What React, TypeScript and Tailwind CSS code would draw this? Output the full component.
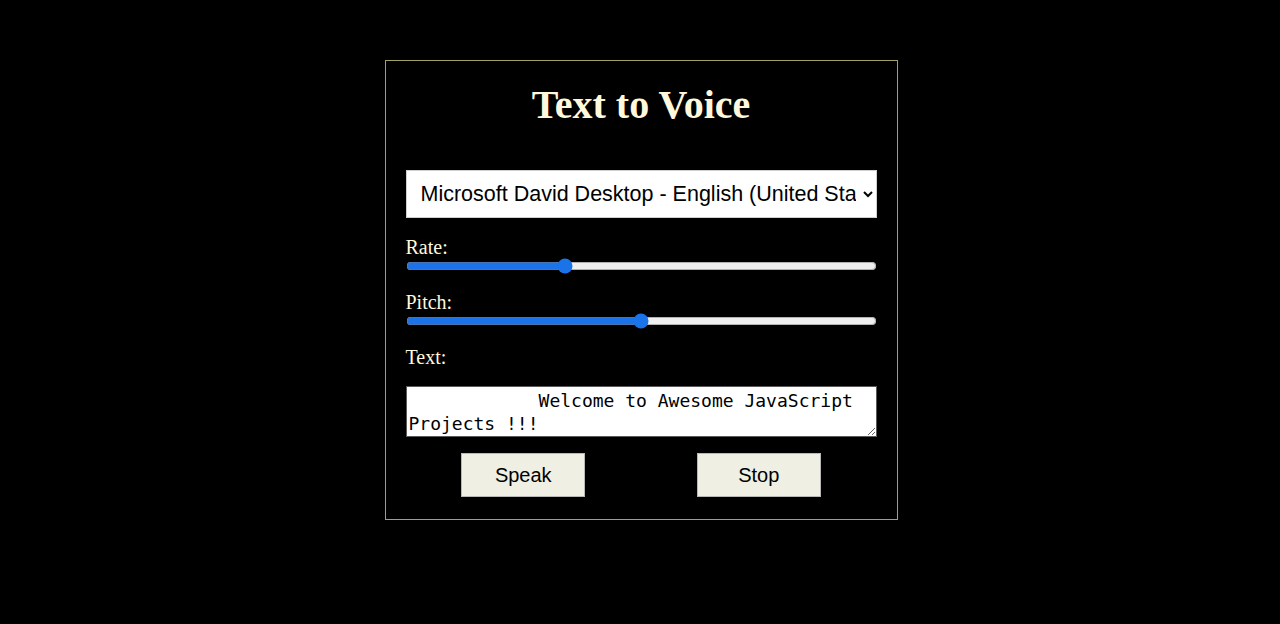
import React, { useState } from 'react'

const serif = { fontFamily: '"Liberation Serif", "Times New Roman", serif' }
const sans = { fontFamily: '"Liberation Sans", Arial, sans-serif' }

export default function App() {
  const [rate, setRate] = useState(1)
  const [pitch, setPitch] = useState(1)
  const [text, setText] = useState('            Welcome to Awesome JavaScript Projects !!!')

  return (
    <div className="min-h-screen bg-black pl-[2px] pt-[60px]" style={serif}>
      <div className="mx-auto flex w-[513px] flex-col border border-[#a4a262] px-[20px] pb-[22px] pt-[21px] text-[#fff8dc]">
        <h1 className="text-center text-[40px] font-bold leading-[46px]">Text to Voice</h1>

        <select
          className="mt-[42px] h-[48px] w-full border border-[#cfcfcf] bg-white pl-[10px] pr-[4px] text-[21.5px] text-black"
          style={sans}
          defaultValue="david"
        >
          <option value="david">Microsoft David Desktop - English (United States)</option>
          <option value="zira">Microsoft Zira Desktop - English (United States)</option>
        </select>

        <label className="mt-[18px] block text-[20px] leading-[23px]">Rate:</label>
        <input
          type="range"
          min={0.5}
          max={2}
          step={0.1}
          value={rate}
          onChange={(e) => setRate(Number(e.target.value))}
          className="m-0 block h-[14px] w-full accent-[#1a73e8]"
        />

        <label className="mt-[18px] block text-[20px] leading-[23px]">Pitch:</label>
        <input
          type="range"
          min={0}
          max={2}
          step={0.1}
          value={pitch}
          onChange={(e) => setPitch(Number(e.target.value))}
          className="m-0 block h-[14px] w-full accent-[#1a73e8]"
        />

        <label className="mt-[18px] block text-[20px] leading-[23px]">Text:</label>
        <textarea
          rows={2}
          value={text}
          onChange={(e) => setText(e.target.value)}
          className="mt-[17px] block h-[51px] w-full overflow-y-scroll border border-[#5a5a5a] bg-white p-[2px] text-[18px] leading-[23px] text-black [&::-webkit-scrollbar]:w-[15px] [&::-webkit-scrollbar-thumb]:bg-[#c1c1c1] [&::-webkit-scrollbar-track]:bg-[#f1f1f1]"
          style={{ fontFamily: '"DejaVu Sans Mono", Consolas, monospace' }}
        />

        <div className="mt-[16px] flex justify-around">
          <button
            className="h-[44px] w-[124px] border border-[#b8b8b8] bg-[#efefe4] text-[20px] text-black"
            style={sans}
          >
            Speak
          </button>
          <button
            className="h-[44px] w-[124px] border border-[#b8b8b8] bg-[#efefe4] text-[20px] text-black"
            style={sans}
          >
            Stop
          </button>
        </div>
      </div>
    </div>
  )
}
